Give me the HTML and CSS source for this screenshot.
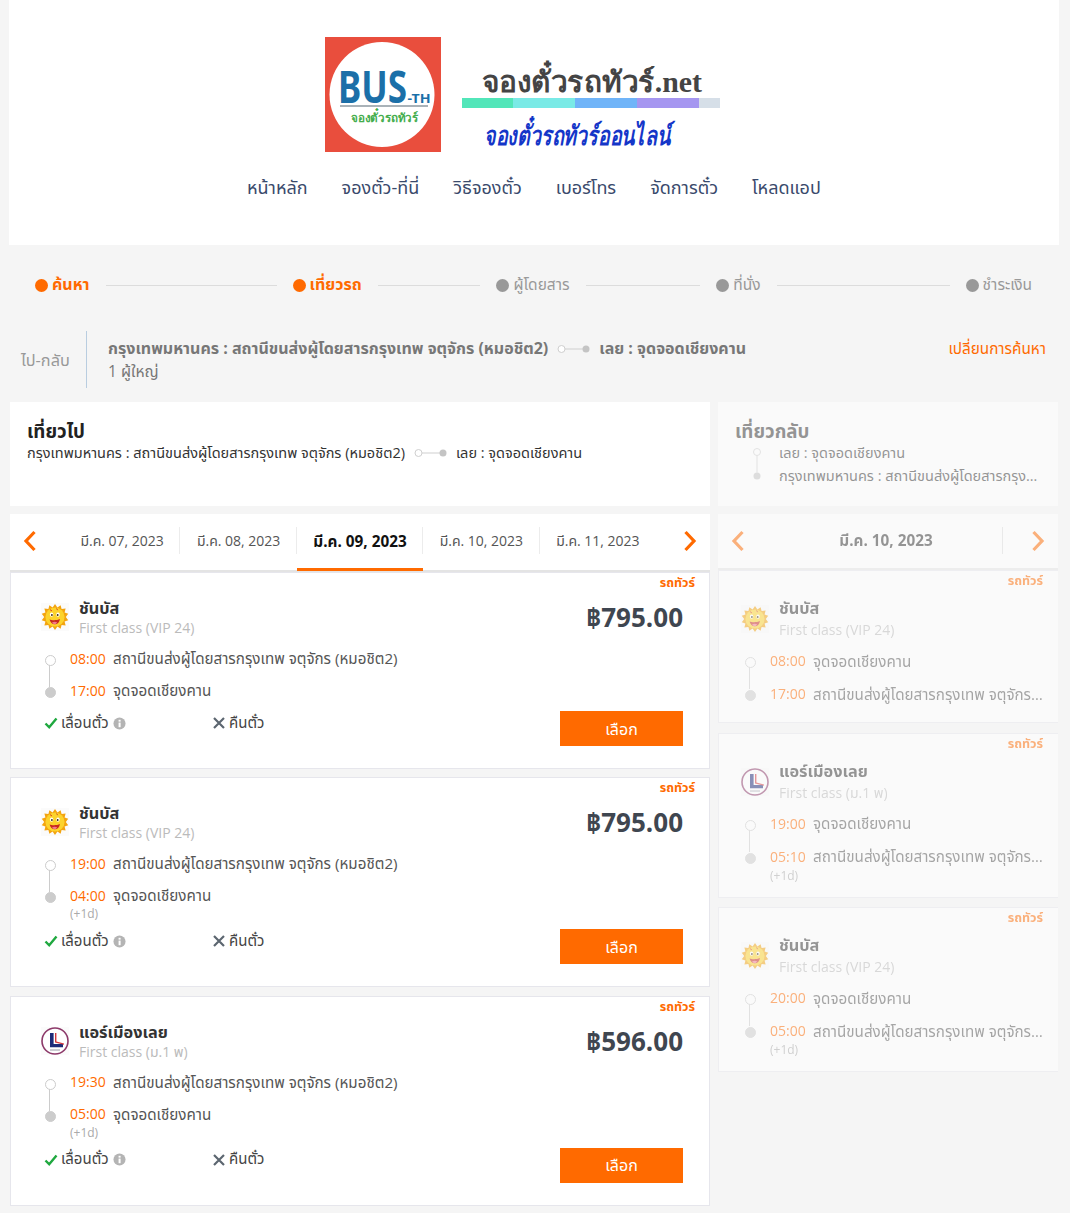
FILE: index.html
```html
<!DOCTYPE html>
<html lang="th">
<head>
<meta charset="utf-8">
<title>จองตั๋วรถทัวร์</title>
<link rel="stylesheet" href="styles.css">
</head>
<body>
<svg class="defs" width="0" height="0" aria-hidden="true">
  <defs>
    <symbol id="sun" viewBox="0 0 28 28">
      <rect width="28" height="28" fill="#fbfbfb"/>
      <polygon points="14,1 16.4,4.6 19.6,2.2 20.6,6 24.6,5.4 23.6,9.4 27.2,10.8 24.8,14 27.2,17.2 23.6,18.6 24.6,22.6 20.6,22 19.6,25.8 16.4,23.4 14,27 11.6,23.4 8.4,25.8 7.4,22 3.4,22.6 4.4,18.6 .8,17.2 3.2,14 .8,10.8 4.4,9.4 3.4,5.4 7.4,6 8.4,2.2 11.6,4.6" fill="#f3a40f"/>
      <circle cx="14" cy="14" r="9.6" fill="#fcd32c"/>
      <ellipse cx="10.6" cy="11.6" rx="1.7" ry="2.2" fill="#fff"/>
      <ellipse cx="17" cy="11.6" rx="1.7" ry="2.2" fill="#fff"/>
      <circle cx="10.9" cy="12" r=".9" fill="#3a2a10"/>
      <circle cx="16.7" cy="12" r=".9" fill="#3a2a10"/>
      <path d="M8.6 16.4c2 1 7 1.2 10.4-.4-.6 3.6-2.6 5.2-5.2 5.2s-4.4-1.6-5.2-4.8z" fill="#c8281e"/>
      <path d="M11 19.6c1.6-1 3.6-1 5.2-.2-.8 1.2-1.6 1.8-2.6 1.8s-1.8-.6-2.6-1.6z" fill="#f27a8a"/>
      <path d="M9 6.6l2 1.4M15.6 5.4l1 1.8" stroke="#d9481f" stroke-width="1" fill="none"/>
    </symbol>
    <symbol id="air" viewBox="0 0 28 28">
      <rect width="28" height="28" fill="#fbfbfb"/>
      <circle cx="14" cy="14" r="13" fill="#fff" stroke="#8d3a6a" stroke-width="1.6"/>
      <path d="M9 6h3.6v11h9.400v3.200H9z" fill="#1d2a78"/>
      <path d="M14 6h1.400v8.400l7.600 2v1.300l-9-2.300z" fill="#d2373c"/>
      <path d="M9 23h10" stroke="#8c8c9a" stroke-width=".9"/>
    </symbol>
    <symbol id="chev-l" viewBox="0 0 14 22">
      <path d="M11.500 2 3 11l8.500 9" fill="none" stroke="currentColor" stroke-width="3.200"/>
    </symbol>
    <symbol id="chev-r" viewBox="0 0 14 22">
      <path d="M2.500 2 11 11l-8.500 9" fill="none" stroke="currentColor" stroke-width="3.200"/>
    </symbol>
    <symbol id="check" viewBox="0 0 14 14">
      <path d="M1.500 7.500 5.200 11.300 12.500 2.500" fill="none" stroke="#1fa83f" stroke-width="2.400"/>
    </symbol>
    <symbol id="cross" viewBox="0 0 14 14">
      <path d="M2 2l10 10M12 2 2 12" fill="none" stroke="#5c6670" stroke-width="2.200"/>
    </symbol>
    <symbol id="info" viewBox="0 0 14 14">
      <circle cx="7" cy="7" r="6.500" fill="#b4b4b4"/>
      <rect x="6" y="6" width="2.200" height="5" fill="#fff"/>
      <rect x="6" y="3" width="2.200" height="2" fill="#fff"/>
    </symbol>
    <symbol id="link" viewBox="0 0 33 10">
      <circle cx="4.500" cy="5" r="3.500" fill="#fff" stroke="#cfcfcf"/>
      <path d="M8 5h20" stroke="#cfcfcf"/>
      <circle cx="29" cy="5" r="3.500" fill="#c4c4c4"/>
    </symbol>
  </defs>
</svg>

<header class="site-header">
  <svg class="brand" viewBox="0 0 400 120" width="400" height="120" role="img" aria-label="Bus-TH จองตั๋วรถทัวร์.net">
    <rect x="0" y="2" width="116" height="115" fill="#e94e3d"/>
    <circle cx="57" cy="59.500" r="52.500" fill="#fff"/>
    <text x="13" y="68" class="bus" textLength="69" lengthAdjust="spacingAndGlyphs">BUS</text>
    <text x="82.500" y="68" class="th" textLength="23" lengthAdjust="spacingAndGlyphs">-TH</text>
    <rect x="15" y="70" width="88" height="2" fill="#a9b2b8"/>
    <text x="26" y="87" class="bus-th" textLength="67" lengthAdjust="spacingAndGlyphs">จองตั๋วรถทัวร์</text>
    <text x="157" y="57" class="net" textLength="220" lengthAdjust="spacingAndGlyphs">จองตั๋วรถทัวร์.net</text>
    <rect x="137" y="63" width="51" height="10" fill="#52e6b9"/>
    <rect x="188" y="63" width="62" height="10" fill="#7aeae6"/>
    <rect x="250" y="63" width="62" height="10" fill="#70b4f8"/>
    <rect x="312" y="63" width="62" height="10" fill="#a596f0"/>
    <rect x="374" y="63" width="21" height="10" fill="#d6dfe8"/>
    <text x="159" y="110" class="online" textLength="186" lengthAdjust="spacingAndGlyphs">จองตั๋วรถทัวร์ออนไลน์</text>
  </svg>
  <nav class="main-nav">
    <a>หน้าหลัก</a><a>จองตั๋ว-ที่นี่</a><a>วิธีจองตั๋ว</a><a>เบอร์โทร</a><a>จัดการตั๋ว</a><a>โหลดแอป</a>
  </nav>
</header>

<ol class="steps">
  <li class="step on"><i></i>ค้นหา</li>
  <li class="rule r1"></li>
  <li class="step on"><i></i>เที่ยวรถ</li>
  <li class="rule r2"></li>
  <li class="step"><i></i>ผู้โดยสาร</li>
  <li class="rule r3"></li>
  <li class="step"><i></i>ที่นั่ง</li>
  <li class="rule r4"></li>
  <li class="step"><i></i>ชำระเงิน</li>
</ol>

<section class="summary">
  <div class="trip-type">ไป-กลับ</div>
  <div class="summary-main">
    <div class="summary-route">กรุงเทพมหานคร : สถานีขนส่งผู้โดยสารกรุงเทพ จตุจักร (หมอชิต2)<svg class="link"><use href="#link"/></svg>เลย : จุดจอดเชียงคาน</div>
    <div class="summary-pax">1 ผู้ใหญ่</div>
  </div>
  <a class="change">เปลี่ยนการค้นหา</a>
</section>

<main class="columns">
  <section class="col col-out">
    <div class="col-head">
      <h2>เที่ยวไป</h2>
      <p>กรุงเทพมหานคร : สถานีขนส่งผู้โดยสารกรุงเทพ จตุจักร (หมอชิต2)<svg class="link"><use href="#link"/></svg>เลย : จุดจอดเชียงคาน</p>
    </div>
    <div class="date-bar">
      <svg class="chev"><use href="#chev-l"/></svg>
      <div class="tabs">
        <span class="tab">มี.ค. 07, 2023</span>
        <span class="tab">มี.ค. 08, 2023</span>
        <span class="tab active">มี.ค. 09, 2023</span>
        <span class="tab">มี.ค. 10, 2023</span>
        <span class="tab last">มี.ค. 11, 2023</span>
      </div>
      <svg class="chev"><use href="#chev-r"/></svg>
    </div>

    <article class="card">
      <span class="tag">รถทัวร์</span>
      <div class="card-top">
        <svg class="op-logo"><use href="#sun"/></svg>
        <div class="op"><b>ชันบัส</b><span>First class (VIP 24)</span></div>
        <div class="price">฿795.00</div>
      </div>
      <div class="times">
        <div class="t"><time>08:00</time><span>สถานีขนส่งผู้โดยสารกรุงเทพ จตุจักร (หมอชิต2)</span></div>
        <div class="t"><time>17:00</time><span>จุดจอดเชียงคาน</span></div>
      </div>
      <div class="card-foot">
        <div class="feat yes"><svg class="fi"><use href="#check"/></svg>เลื่อนตั๋ว<svg class="inf"><use href="#info"/></svg></div>
        <div class="feat no"><svg class="fi"><use href="#cross"/></svg>คืนตั๋ว</div>
        <button class="pick">เลือก</button>
      </div>
    </article>

    <article class="card">
      <span class="tag">รถทัวร์</span>
      <div class="card-top">
        <svg class="op-logo"><use href="#sun"/></svg>
        <div class="op"><b>ชันบัส</b><span>First class (VIP 24)</span></div>
        <div class="price">฿795.00</div>
      </div>
      <div class="times">
        <div class="t"><time>19:00</time><span>สถานีขนส่งผู้โดยสารกรุงเทพ จตุจักร (หมอชิต2)</span></div>
        <div class="t"><time>04:00</time><span>จุดจอดเชียงคาน</span></div>
        <small>(+1d)</small>
      </div>
      <div class="card-foot">
        <div class="feat yes"><svg class="fi"><use href="#check"/></svg>เลื่อนตั๋ว<svg class="inf"><use href="#info"/></svg></div>
        <div class="feat no"><svg class="fi"><use href="#cross"/></svg>คืนตั๋ว</div>
        <button class="pick">เลือก</button>
      </div>
    </article>

    <article class="card">
      <span class="tag">รถทัวร์</span>
      <div class="card-top">
        <svg class="op-logo"><use href="#air"/></svg>
        <div class="op"><b>แอร์เมืองเลย</b><span>First class (ม.1 พ)</span></div>
        <div class="price">฿596.00</div>
      </div>
      <div class="times">
        <div class="t"><time>19:30</time><span>สถานีขนส่งผู้โดยสารกรุงเทพ จตุจักร (หมอชิต2)</span></div>
        <div class="t"><time>05:00</time><span>จุดจอดเชียงคาน</span></div>
        <small>(+1d)</small>
      </div>
      <div class="card-foot">
        <div class="feat yes"><svg class="fi"><use href="#check"/></svg>เลื่อนตั๋ว<svg class="inf"><use href="#info"/></svg></div>
        <div class="feat no"><svg class="fi"><use href="#cross"/></svg>คืนตั๋ว</div>
        <button class="pick">เลือก</button>
      </div>
    </article>
  </section>

  <section class="col col-back">
    <div class="col-head">
      <h2>เที่ยวกลับ</h2>
      <div class="stack">
        <svg class="vlink" viewBox="0 0 10 34"><circle cx="5" cy="5" r="3.500" fill="#fff" stroke="#cfcfcf"/><path d="M5 8.500v17" stroke="#cfcfcf"/><circle cx="5" cy="29" r="3.500" fill="#c4c4c4"/></svg>
        <div class="stack-text"><p>เลย : จุดจอดเชียงคาน</p><p>กรุงเทพมหานคร : สถานีขนส่งผู้โดยสารกรุงเทพ จตุจักร (หมอชิต2)</p></div>
      </div>
    </div>
    <div class="date-bar back">
      <svg class="chev"><use href="#chev-l"/></svg>
      <div class="tabs"><span class="tab active">มี.ค. 10, 2023</span></div>
      <svg class="chev"><use href="#chev-r"/></svg>
    </div>

    <article class="card">
      <span class="tag">รถทัวร์</span>
      <div class="card-top">
        <svg class="op-logo"><use href="#sun"/></svg>
        <div class="op"><b>ชันบัส</b><span>First class (VIP 24)</span></div>
      </div>
      <div class="times">
        <div class="t"><time>08:00</time><span>จุดจอดเชียงคาน</span></div>
        <div class="t"><time>17:00</time><span>สถานีขนส่งผู้โดยสารกรุงเทพ จตุจักร (หมอชิต2)</span></div>
      </div>
    </article>

    <article class="card">
      <span class="tag">รถทัวร์</span>
      <div class="card-top">
        <svg class="op-logo"><use href="#air"/></svg>
        <div class="op"><b>แอร์เมืองเลย</b><span>First class (ม.1 พ)</span></div>
      </div>
      <div class="times">
        <div class="t"><time>19:00</time><span>จุดจอดเชียงคาน</span></div>
        <div class="t"><time>05:10</time><span>สถานีขนส่งผู้โดยสารกรุงเทพ จตุจักร (หมอชิต2)</span></div>
        <small>(+1d)</small>
      </div>
    </article>

    <article class="card">
      <span class="tag">รถทัวร์</span>
      <div class="card-top">
        <svg class="op-logo"><use href="#sun"/></svg>
        <div class="op"><b>ชันบัส</b><span>First class (VIP 24)</span></div>
      </div>
      <div class="times">
        <div class="t"><time>20:00</time><span>จุดจอดเชียงคาน</span></div>
        <div class="t"><time>05:00</time><span>สถานีขนส่งผู้โดยสารกรุงเทพ จตุจักร (หมอชิต2)</span></div>
        <small>(+1d)</small>
      </div>
    </article>
  </section>
</main>
</body>
</html>
```

FILE: styles.css
```css
* { box-sizing: border-box; }
html, body { margin: 0; padding: 0; }
body {
  width: 1070px;
  height: 1213px;
  overflow: hidden;
  background: #f5f5f5;
  color: #4a4a4a;
  font-family: "Open Sans", "Noto Sans", "Noto Sans Thai", "Liberation Sans", sans-serif;
  font-size: 14px;
}
.defs { position: absolute; }
p, h2, ol { margin: 0; padding: 0; }
svg { display: block; flex: none; }

/* header */
.site-header {
  width: 1050px;
  height: 245px;
  margin-left: 9px;
  background: #fff;
  padding-top: 35px;
}
.brand { margin-left: 316px; }
.brand text { font-family: "Noto Sans", "Liberation Sans", sans-serif; }
.brand .bus { font-size: 44px; font-weight: 700; fill: #1b6fa8; }
.brand .th { font-size: 13px; font-weight: 700; fill: #1b6fa8; }
.brand .bus-th { font-size: 12px; font-weight: 700; fill: #44ad4d; }
.brand .net { font-family: "Liberation Serif", serif; font-size: 29px; font-weight: 700; fill: #444; }
.brand .online { font-size: 27px; font-weight: 700; font-style: italic; fill: #1436c8; }
.main-nav {
  display: flex;
  gap: 34px;
  margin: 13px 0 0 238px;
  color: #3a4a6c;
  font-size: 18px;
  line-height: 38px;
}

/* steps */
.steps {
  list-style: none;
  display: flex;
  align-items: center;
  gap: 16px;
  height: 30px;
  margin: 25px 0 0;
  padding: 0 38px 0 35px;
}
.step {
  display: flex;
  align-items: center;
  gap: 4px;
  color: #999;
  font-size: 15.500px;
}
.step i { width: 13px; height: 13px; border-radius: 50%; background: #999; }
.step.on { color: #ff6a00; font-weight: 700; font-size: 16px; }
.step.on i { background: #ff6a00; }
.rule { height: 1px; background: #dcdcdc; }
.r1 { flex: 170; }
.r2 { flex: 102; }
.r3 { flex: 114; }
.r4 { flex: 172; }

/* summary */
.summary {
  display: flex;
  margin: 31px 24px 0 20px;
  height: 57px;
  color: #999;
}
.trip-type { width: 67px; padding-left: 1px; line-height: 59px; font-size: 16.300px; border-right: 1px solid #b9cde0; }
.summary-main { flex: 1; padding-left: 21px; }
.summary-route { display: flex; align-items: center; height: 36px; font-weight: 700; color: #777; font-size: 16px; }
.summary-pax { color: #777; line-height: 16px; font-size: 15.500px; margin-top: -4px; }
.link { width: 33px; height: 10px; margin: 0 9px; }
.change { color: #ff6a00; font-size: 15.300px; line-height: 34px; }

/* columns */
.columns { display: flex; gap: 8px; margin: 14px 12px 0 10px; align-items: flex-start; }
.col-out { width: 700px; flex: none; }
.col-back { flex: 1; min-width: 0; opacity: .5; }
.col-head { background: #fff; height: 104px; padding: 17px 17px 0; margin-bottom: 8px; }
.col-head h2 { font-size: 18.700px; font-weight: 700; color: #222; line-height: 24px; }
.col-head p { display: flex; align-items: center; color: #333; font-size: 14.500px; line-height: 20px; }
.col-back .col-head h2 { color: #333; }
.stack { display: flex; gap: 17px; padding-left: 17px; }
.vlink { width: 10px; height: 34px; margin-top: 4px; }
.stack-text { min-width: 0; flex: 1; }
.stack-text p { display: block; margin: 0 0 3px; overflow: hidden; white-space: nowrap; text-overflow: ellipsis; }

/* date bar */
.date-bar {
  display: flex;
  align-items: center;
  height: 58px;
  padding: 0 13px;
  background: #fff;
  border-bottom: 2px solid #e4e4e4;
  color: #ff6a00;
}
.col-out .chev { margin-top: -2px; }
.chev { width: 14px; height: 22px; }
.tabs { position: relative; flex: 1; display: flex; justify-content: center; align-self: stretch; color: #555; }
.tab {
  position: relative;
  display: flex;
  align-items: center;
  padding: 0 16.500px 1px;
  font-size: 14px;
  white-space: nowrap;
}
.tab::after {
  content: "";
  position: absolute;
  right: 0; top: 13px;
  height: 27px; width: 1px;
  background: #ececec;
}
.tab.last::after { display: none; }
.tab.active { color: #111; font-weight: 700; font-size: 15.300px; box-shadow: inset 0 -3px 0 #ff6a00; margin-bottom: -1px; }
.date-bar.back { height: 56px; }
.back .tabs { color: #333; padding-right: 4px; }
.back .tabs::after {
  content: "";
  position: absolute;
  right: 28px; top: 13px;
  height: 27px; width: 1px;
  background: #ddd;
}
.back .tab { padding-bottom: 0; margin-bottom: 0; }
.back .tab.active { color: #333; box-shadow: none; margin-bottom: 0; }
.back .tab.active::after { display: none; }

/* cards */
.card {
  position: relative;
  background: #fff;
  border: 1px solid #e6e6ec;
  margin-bottom: 8.400px;
  padding: 25px 26px 22px 30px;
}
.col-back .card { padding: 27px 12px 12px 22px; border-right: 0; margin-bottom: 9.500px; }
.tag {
  position: absolute;
  top: 2px; right: 14px;
  color: #ff6a00;
  font-size: 12.500px;
  font-weight: 700;
  line-height: 16px;
}
.col-back .tag { right: 15px; }
.card-top { display: flex; align-items: flex-start; }
.op-logo { width: 28px; height: 28px; margin-top: 5px; }
.op { flex: 1; padding-left: 10px; display: flex; flex-direction: column; }
.op b { color: #333; font-size: 16.300px; line-height: 20px; }
.op span { color: #bbb; font-size: 14px; line-height: 20px; }
.col-back .op span { margin-top: 2px; }
.col-back .op-logo { margin-top: 7px; }
.price { color: #3f4650; font-size: 26px; font-weight: 700; line-height: 36px; margin-top: 1px; height: 39px; }
.times { margin-top: 4px; padding-left: 29px; position: relative; }
.times::before {
  content: "";
  position: absolute;
  left: 8px; top: 22px;
  width: 1px; height: 23px;
  background: #ccc;
}
.t { position: relative; display: flex; height: 32px; align-items: center; }
.col-back .t { height: 33px; }
.t::before {
  content: "";
  position: absolute;
  left: -25px; top: 13px;
  width: 9px; height: 9px;
  border-radius: 50%;
  background: #fff;
  border: 1px solid #ccc;
}
.t + .t::before { background: #ccc; }
.t time { color: #ff6a00; font-size: 14px; width: 43px; flex: none; }
.t span { color: #555; font-size: 15.200px; line-height: 20px; overflow: hidden; white-space: nowrap; text-overflow: ellipsis; min-width: 0; }
.times small { display: block; color: #aaa; font-size: 12px; line-height: 13px; margin-top: -4px; padding-bottom: 4px; }
.col-back .times small { padding-bottom: 3px; }
.card-foot { display: flex; align-items: flex-start; margin-top: 5px; padding-left: 3px; }
.feat { display: flex; align-items: center; height: 24px; color: #444; font-size: 15px; gap: 3px; }
.feat.yes { width: 168px; }
.feat.no { flex: 1; }
.fi { width: 14px; height: 14px; }
.inf { width: 13px; height: 13px; margin-left: 1px; }
.pick {
  width: 123px;
  height: 35px;
  border: 0;
  padding: 2px 0 0;
  background: #ff6a00;
  color: #fff;
  font: inherit;
  font-size: 16px;
}
```
